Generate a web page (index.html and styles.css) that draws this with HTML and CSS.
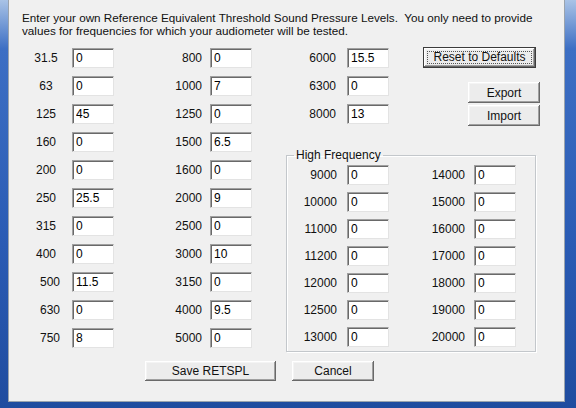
FILE: index.html
```html
<!DOCTYPE html>
<html lang="en">
<head>
    <meta charset="UTF-8">
    <meta name="viewport" content="width=device-width, initial-scale=1.0">
    <title>Custom RETSPL</title>
    <link rel="stylesheet" href="styles.css">
</head>
<body>
    <div class="window">
        <div class="dialog">
            <p class="intro">Enter your own Reference Equivalent Threshold Sound Pressure Levels.&nbsp; You only need to provide<br>values for frequencies for which your audiometer will be tested.</p>

            <div class="panel">
                <div class="col col-a">
                    <div class="field"><label>31.5</label><input type="text" value="0"></div>
                    <div class="field"><label>63</label><input type="text" value="0"></div>
                    <div class="field"><label>125</label><input type="text" value="45"></div>
                    <div class="field"><label>160</label><input type="text" value="0"></div>
                    <div class="field"><label>200</label><input type="text" value="0"></div>
                    <div class="field"><label>250</label><input type="text" value="25.5"></div>
                    <div class="field"><label>315</label><input type="text" value="0"></div>
                    <div class="field"><label>400</label><input type="text" value="0"></div>
                    <div class="field nudge"><label>500</label><input type="text" value="11.5"></div>
                    <div class="field nudge"><label>630</label><input type="text" value="0"></div>
                    <div class="field nudge"><label>750</label><input type="text" value="8"></div>
                </div>

                <div class="col col-b">
                    <div class="field"><label>800</label><input type="text" value="0"></div>
                    <div class="field"><label>1000</label><input type="text" value="7"></div>
                    <div class="field"><label>1250</label><input type="text" value="0"></div>
                    <div class="field"><label>1500</label><input type="text" value="6.5"></div>
                    <div class="field"><label>1600</label><input type="text" value="0"></div>
                    <div class="field"><label>2000</label><input type="text" value="9"></div>
                    <div class="field"><label>2500</label><input type="text" value="0"></div>
                    <div class="field"><label>3000</label><input type="text" value="10"></div>
                    <div class="field"><label>3150</label><input type="text" value="0"></div>
                    <div class="field"><label>4000</label><input type="text" value="9.5"></div>
                    <div class="field"><label>5000</label><input type="text" value="0"></div>
                </div>

                <div class="col-c">
                    <div class="top">
                        <div class="col col-c-rows">
                            <div class="field"><label>6000</label><input type="text" value="15.5"></div>
                            <div class="field"><label>6300</label><input type="text" value="0"></div>
                            <div class="field"><label>8000</label><input type="text" value="13"></div>
                        </div>
                        <div class="actions">
                            <button class="btn btn-default"><span>Reset to Defaults</span></button>
                            <button class="btn btn-side btn-export">Export</button>
                            <button class="btn btn-side">Import</button>
                        </div>
                    </div>

                    <fieldset class="group">
                        <legend>High Frequency</legend>
                        <div class="group-cols">
                            <div class="col col-hf-a">
                                <div class="field"><label>9000</label><input type="text" value="0"></div>
                                <div class="field"><label>10000</label><input type="text" value="0"></div>
                                <div class="field"><label>11000</label><input type="text" value="0"></div>
                                <div class="field"><label>11200</label><input type="text" value="0"></div>
                                <div class="field"><label>12000</label><input type="text" value="0"></div>
                                <div class="field"><label>12500</label><input type="text" value="0"></div>
                                <div class="field"><label>13000</label><input type="text" value="0"></div>
                            </div>
                            <div class="col col-hf-b">
                                <div class="field"><label>14000</label><input type="text" value="0"></div>
                                <div class="field"><label>15000</label><input type="text" value="0"></div>
                                <div class="field"><label>16000</label><input type="text" value="0"></div>
                                <div class="field"><label>17000</label><input type="text" value="0"></div>
                                <div class="field"><label>18000</label><input type="text" value="0"></div>
                                <div class="field"><label>19000</label><input type="text" value="0"></div>
                                <div class="field"><label>20000</label><input type="text" value="0"></div>
                            </div>
                        </div>
                    </fieldset>
                </div>
            </div>

            <div class="footer">
                <button class="btn btn-save">Save RETSPL</button>
                <button class="btn btn-cancel">Cancel</button>
            </div>
        </div>
    </div>
</body>
</html>
```

FILE: styles.css
```css
* {
    box-sizing: border-box;
}
body {
    margin: 0;
    font-family: "Liberation Sans", Arial, sans-serif;
    font-size: 12px;
    color: #000;
}
.window {
    width: 576px;
    height: 408px;
    padding: 0 11px 6px 8px;
    background: linear-gradient(to bottom, #a9c3e6 0%, #3d6fc4 12%, #2a5bb4 60%, #1f4c9f 100%);
}
.dialog {
    height: 100%;
    background: #f0f0f0;
    border: 1px solid #9aa3ad;
    border-top: none;
}
.intro {
    margin: 0;
    padding: 11px 0 0 13px;
    font-size: 11.7px;
    line-height: 13px;
    color: #111;
}
.panel {
    display: flex;
    align-items: flex-start;
    margin-top: 11px;
}
.col {
    display: flex;
    flex-direction: column;
    gap: 8px;
}
.field {
    display: flex;
    align-items: center;
    height: 20px;
}
.field label {
    text-align: right;
    color: #111;
}
.field input {
    width: 42px;
    height: 20px;
    padding: 0 3px 1px;
    font: inherit;
    color: #000;
    background: #fff;
    border: 1px solid;
    border-color: #a0a0a0 #e3e3e3 #e3e3e3 #a0a0a0;
    box-shadow: inset 1px 1px 0 #696969;
    outline: none;
}

/* first column: labels sit loosely in their cell */
.col-a {
    margin-left: 21px;
}
.col-a label {
    width: 32px;
    margin-right: 10px;
    text-align: center;
}
.col-a .nudge label {
    padding-left: 8px;
}
.col-b label {
    width: 88px;
    margin-right: 8px;
}
.col-c {
    margin-left: 34px;
}
.top {
    display: flex;
    align-items: flex-start;
}
.col-c-rows label {
    width: 50px;
    margin-right: 11px;
}
.actions {
    display: flex;
    flex-direction: column;
    margin-left: 34px;
    margin-top: -1px;
}

.btn {
    font: inherit;
    color: #111;
    background: #ececec;
    border: none;
    padding: 0;
    box-shadow: inset -1px -1px 0 #696969, inset 1px 1px 0 #fff, inset -2px -2px 0 #a0a0a0, inset 2px 2px 0 #f4f4f4;
}
.btn-default {
    width: 113px;
    height: 21px;
    border: 1px solid #3c3c3c;
    padding: 3px;
}
.btn-default span {
    display: block;
    height: 100%;
    line-height: 11px;
    border: 1px dotted #555;
}
.btn-side {
    width: 72px;
    height: 21px;
    margin-left: 45px;
}
.btn-export {
    margin-top: 14px;
    margin-bottom: 2px;
}

.group {
    width: 250px;
    margin: 22px 0 0;
    padding: 3px 18px 4px 0;
    border: 1px solid #c3c7cb;
    box-shadow: 1px 1px 0 #fff, inset 1px 1px 0 #fff;
}
.group legend {
    margin-left: 7px;
    padding: 0 2px;
    line-height: 14px;
    color: #111;
}
.group-cols {
    display: flex;
}
.group .col {
    gap: 7px;
}
.col-hf-a label {
    width: 50px;
    margin-right: 10px;
}
.col-hf-b label {
    width: 76px;
    margin-right: 9px;
}

.footer {
    display: flex;
    gap: 16px;
    margin: 9px 0 0 136px;
}
.btn-save {
    width: 131px;
    height: 20px;
}
.btn-cancel {
    width: 82px;
    height: 20px;
}
```
